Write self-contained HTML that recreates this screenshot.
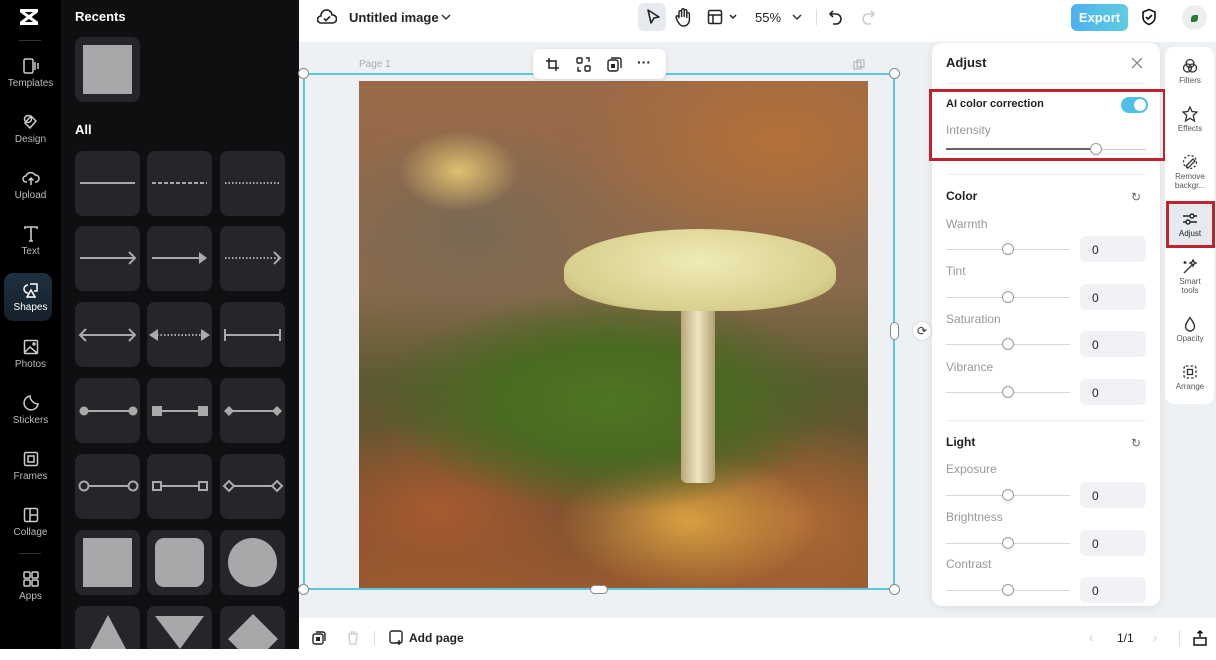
<!DOCTYPE html><html><head><meta charset="utf-8"><style>
*{box-sizing:border-box;margin:0;padding:0}
body{width:1216px;height:660px;overflow:hidden;background:#fff;font-family:"Liberation Sans",sans-serif;position:relative}
.a{position:absolute}
#rail{left:0;top:0;width:61px;height:649px;background:#000}
#panel{left:61px;top:0;width:238px;height:649px;background:#0f0f12}
.ri{position:absolute;left:0;width:61px;text-align:center;color:#bbb;font-size:10px}
.ri svg{display:block;margin:0 auto 3px}
.tile{position:absolute;width:65px;height:65px;background:#26262a;border-radius:8px}
.tile svg{position:absolute;left:0;top:0}
#canvas{left:299px;top:42px;width:917px;height:576px;background:#eef1f4}
.lbl{color:#999;font-size:12px}
.sl{position:absolute;height:1px;background:#d4d7dc}
.kn{position:absolute;width:12px;height:12px;border:1px solid #999;border-radius:50%;background:#fff}
.box{position:absolute;width:66px;height:26px;background:#f0f2f5;border-radius:6px;font-size:12px;color:#222;padding:7px 0 0 12px}
.side{position:absolute;left:1166px;width:48px;text-align:center;font-size:8px;color:#555;line-height:9px}
.side svg{display:block;margin:0 auto 2px}
</style></head><body>
<div id="rail" class="a">
<svg class="a" style="left:17px;top:8px" width="24" height="18" viewBox="0 0 24 18"><path d="M3 2.5h18M3 15.5h18M4 3l16 12M20 3L4 15" stroke="#fff" stroke-width="3" fill="none"/></svg>
<div class="a" style="left:19px;top:40px;width:22px;height:1px;background:#333"></div>
<div class="ri" style="top:57px"><svg width="18" height="18" viewBox="0 0 18 18" fill="none" stroke="#ccc" stroke-width="1.5"><rect x="2" y="2" width="9" height="14" rx="1.5"/><path d="M13 5v8M16 6v6"/></svg>Templates</div>
<div class="ri" style="top:113px"><svg width="18" height="18" viewBox="0 0 18 18" fill="none" stroke="#ccc" stroke-width="1.5"><circle cx="6" cy="6" r="3.5"/><path d="M9 3l5 5-6 7-5-5z"/></svg>Design</div>
<div class="ri" style="top:169px"><svg width="18" height="18" viewBox="0 0 18 18" fill="none" stroke="#ccc" stroke-width="1.5"><path d="M5 13H4a3 3 0 010-6 5 5 0 019-1 3.5 3.5 0 011 7h-1M9 16V9M6.5 11.5L9 9l2.5 2.5"/></svg>Upload</div>
<div class="ri" style="top:225px"><svg width="18" height="18" viewBox="0 0 18 18" fill="none" stroke="#ccc" stroke-width="1.6"><path d="M3 4V2h12v2M9 2v14M7 16h4"/></svg>Text</div>
<div class="a" style="left:4px;top:273px;width:48px;height:48px;border-radius:9px;background:linear-gradient(#1d3040,#15202b)"></div>
<div class="ri" style="top:281px;color:#fff"><svg width="18" height="18" viewBox="0 0 18 18" fill="none" stroke="#fff" stroke-width="1.5"><path d="M6 12a4 4 0 110-8M8 3h7v7h-3M9 9l-4 7h8z"/></svg>Shapes</div>
<div class="ri" style="top:338px"><svg width="18" height="18" viewBox="0 0 18 18" fill="none" stroke="#ccc" stroke-width="1.5"><rect x="2.5" y="2.5" width="13" height="13" rx="1"/><path d="M3 14l5-5 7 6"/><circle cx="12" cy="6" r="1"/></svg>Photos</div>
<div class="ri" style="top:394px"><svg width="18" height="18" viewBox="0 0 18 18" fill="none" stroke="#ccc" stroke-width="1.5"><path d="M16 10a7 7 0 11-8-8c0 4 4 8 8 8z"/></svg>Stickers</div>
<div class="ri" style="top:450px"><svg width="18" height="18" viewBox="0 0 18 18" fill="none" stroke="#ccc" stroke-width="1.5"><rect x="2.5" y="2.5" width="13" height="13" rx="1.5"/><rect x="6" y="6" width="6" height="6"/></svg>Frames</div>
<div class="ri" style="top:506px"><svg width="18" height="18" viewBox="0 0 18 18" fill="none" stroke="#ccc" stroke-width="1.5"><rect x="2.5" y="2.5" width="13" height="13" rx="1.5"/><path d="M8 2.5v13M8 9h7.5"/></svg>Collage</div>
<div class="a" style="left:19px;top:553px;width:22px;height:1px;background:#333"></div>
<div class="ri" style="top:570px"><svg width="18" height="18" viewBox="0 0 18 18" fill="none" stroke="#ccc" stroke-width="1.5"><rect x="2" y="2" width="6" height="6" rx="1"/><rect x="10" y="2" width="6" height="6" rx="1"/><rect x="2" y="10" width="6" height="6" rx="1"/><rect x="10" y="10" width="6" height="6" rx="1"/></svg>Apps</div>
</div>
<div id="panel" class="a">
<div class="a" style="left:14px;top:9px;color:#fff;font-weight:bold;font-size:13px">Recents</div>
<div class="tile" style="left:14px;top:37px"><div class="a" style="left:8px;top:8px;width:49px;height:49px;background:#a8a8aa"></div></div>
<div class="a" style="left:14px;top:122px;color:#fff;font-weight:bold;font-size:13px">All</div>
</div>
<div class="tile" style="left:75px;top:151px"><svg width="65" height="65"><path d="M5 32h55" stroke="#aaa" stroke-width="2"/></svg></div>
<div class="tile" style="left:147px;top:151px"><svg width="65" height="65"><path d="M5 32h55" stroke="#aaa" stroke-width="2" stroke-dasharray="4 2"/></svg></div>
<div class="tile" style="left:220px;top:151px"><svg width="65" height="65"><path d="M5 32h55" stroke="#aaa" stroke-width="2" stroke-dasharray="1.5 2"/></svg></div>
<div class="tile" style="left:75px;top:226px"><svg width="65" height="65"><path d="M5 32h55M54 26l6 6-6 6" stroke="#aaa" stroke-width="2" fill="none"/></svg></div>
<div class="tile" style="left:147px;top:226px"><svg width="65" height="65"><path d="M5 32h50" stroke="#aaa" stroke-width="2"/><path d="M52 26l8 6-8 6z" fill="#aaa"/></svg></div>
<div class="tile" style="left:220px;top:226px"><svg width="65" height="65"><path d="M5 32h55" stroke="#aaa" stroke-width="2" stroke-dasharray="1.5 2"/><path d="M54 26l6 6-6 6" stroke="#aaa" stroke-width="2" fill="none"/></svg></div>
<div class="tile" style="left:75px;top:302px"><svg width="65" height="65"><path d="M5 33h55M11 27l-6 6 6 6M54 27l6 6-6 6" stroke="#aaa" stroke-width="2" fill="none"/></svg></div>
<div class="tile" style="left:147px;top:302px"><svg width="65" height="65"><path d="M10 33h45" stroke="#aaa" stroke-width="2" stroke-dasharray="1.5 2"/><path d="M2 33l9-6v12zM63 33l-9-6v12z" fill="#aaa"/></svg></div>
<div class="tile" style="left:220px;top:302px"><svg width="65" height="65"><path d="M5 33h55M5 27v12M60 27v12" stroke="#aaa" stroke-width="2" fill="none"/></svg></div>
<div class="tile" style="left:75px;top:378px"><svg width="65" height="65"><path d="M8 33h50" stroke="#aaa" stroke-width="2"/><circle cx="9" cy="33" r="4.5" fill="#aaa"/><circle cx="58" cy="33" r="4.5" fill="#aaa"/></svg></div>
<div class="tile" style="left:147px;top:378px"><svg width="65" height="65"><path d="M8 33h50" stroke="#aaa" stroke-width="2"/><rect x="5" y="28" width="10" height="10" fill="#aaa"/><rect x="51" y="28" width="10" height="10" fill="#aaa"/></svg></div>
<div class="tile" style="left:220px;top:378px"><svg width="65" height="65"><path d="M8 33h50" stroke="#aaa" stroke-width="2"/><path d="M9 28l5 5-5 5-5-5zM57 28l5 5-5 5-5-5z" fill="#aaa"/></svg></div>
<div class="tile" style="left:75px;top:454px"><svg width="65" height="65"><path d="M13 32h41" stroke="#aaa" stroke-width="2"/><circle cx="9" cy="32" r="4.5" fill="none" stroke="#aaa" stroke-width="2"/><circle cx="58" cy="32" r="4.5" fill="none" stroke="#aaa" stroke-width="2"/></svg></div>
<div class="tile" style="left:147px;top:454px"><svg width="65" height="65"><path d="M13 32h40" stroke="#aaa" stroke-width="2"/><rect x="6" y="28" width="8" height="8" fill="none" stroke="#aaa" stroke-width="2"/><rect x="52" y="28" width="8" height="8" fill="none" stroke="#aaa" stroke-width="2"/></svg></div>
<div class="tile" style="left:220px;top:454px"><svg width="65" height="65"><path d="M14 32h38" stroke="#aaa" stroke-width="2"/><path d="M9 27l5 5-5 5-5-5zM57 27l5 5-5 5-5-5z" fill="none" stroke="#aaa" stroke-width="2"/></svg></div>
<div class="tile" style="left:75px;top:530px"><div class="a" style="left:8px;top:8px;width:49px;height:49px;background:#a8a8aa"></div></div>
<div class="tile" style="left:147px;top:530px"><div class="a" style="left:8px;top:8px;width:49px;height:49px;background:#a8a8aa;border-radius:9px"></div></div>
<div class="tile" style="left:220px;top:530px"><div class="a" style="left:8px;top:8px;width:49px;height:49px;background:#a8a8aa;border-radius:50%"></div></div>
<div class="tile" style="left:75px;top:606px;height:43px;border-radius:8px 8px 0 0"><svg width="65" height="43"><path d="M33 9l18 34H15z" fill="#a8a8aa"/></svg></div>
<div class="tile" style="left:147px;top:606px;height:43px;border-radius:8px 8px 0 0"><svg width="65" height="43"><path d="M8 10h49L33 43z" fill="#a8a8aa"/></svg></div>
<div class="tile" style="left:220px;top:606px;height:43px;border-radius:8px 8px 0 0"><svg width="65" height="43"><path d="M33 8l25 25-10 10H18L8 33z" fill="#a8a8aa"/></svg></div>
<div class="a" style="left:299px;top:300px;width:8px;height:50px;background:#222;border-radius:0 6px 6px 0"></div>

<svg class="a" style="left:317px;top:8px" width="20" height="18" viewBox="0 0 20 18" fill="none" stroke="#222" stroke-width="1.6"><path d="M5 15H4a3.5 3.5 0 010-7 5.5 5.5 0 0111-1 4 4 0 011 8H5z"/><path d="M7 10.5l2 2 4-4"/></svg>
<div class="a" style="left:349px;top:10px;font-size:13px;font-weight:bold;color:#222">Untitled image</div>
<svg class="a" style="left:441px;top:13px" width="10" height="8"><path d="M1 2l4 4 4-4" stroke="#333" stroke-width="1.5" fill="none"/></svg>
<div class="a" style="left:638px;top:3px;width:28px;height:28px;background:#e6e9ed;border-radius:6px"></div>
<svg class="a" style="left:645px;top:8px" width="16" height="18"><path d="M3 2l11 7-5 1-3 5z" stroke="#222" stroke-width="1.6" fill="none" stroke-linejoin="round"/></svg>
<svg class="a" style="left:674px;top:7px" width="18" height="20" viewBox="0 0 18 20"><path d="M5 11V5a1.3 1.3 0 012.6 0v5V3a1.3 1.3 0 012.6 0v7V4a1.3 1.3 0 012.6 0v7-4a1.3 1.3 0 012.6 0v6a6 6 0 01-6 6c-3 0-4-2-6-5L2 10a1.3 1.3 0 012-1z" stroke="#222" stroke-width="1.4" fill="none"/></svg>
<svg class="a" style="left:707px;top:9px" width="30" height="16"><rect x="1.5" y="1.5" width="13" height="13" rx="1.5" stroke="#222" stroke-width="1.5" fill="none"/><path d="M1.5 6h13M6 6v8.5M23 6l3 3 3-3" stroke="#222" stroke-width="1.5" fill="none"/></svg>
<div class="a" style="left:755px;top:10px;font-size:13px;color:#222">55%</div>
<svg class="a" style="left:792px;top:13px" width="10" height="8"><path d="M1 2l4 4 4-4" stroke="#333" stroke-width="1.5" fill="none"/></svg>
<div class="a" style="left:816px;top:9px;width:1px;height:16px;background:#ddd"></div>
<svg class="a" style="left:828px;top:9px" width="16" height="16"><path d="M5 2L2 5l3 3M2 5h6a5 5 0 010 10H5" stroke="#222" stroke-width="1.6" fill="none"/></svg>
<svg class="a" style="left:860px;top:9px" width="16" height="16"><path d="M11 2l3 3-3 3M14 5H8a5 5 0 000 10h3" stroke="#ccc" stroke-width="1.6" fill="none"/></svg>
<div class="a" style="left:1071px;top:4px;width:57px;height:27px;border-radius:6px;background:linear-gradient(90deg,#4cb1ee,#5fcde0);color:#fff;font-size:13px;font-weight:bold;text-align:center;line-height:27px">Export</div>
<svg class="a" style="left:1141px;top:8px" width="16" height="18"><path d="M8 1.5l6 2.5v5c0 4-3 6.5-6 7.5-3-1-6-3.5-6-7.5V4z" stroke="#111" stroke-width="1.6" fill="none"/><path d="M5 9l2 2 4-4" stroke="#111" stroke-width="1.6" fill="none"/></svg>
<div class="a" style="left:1182px;top:5px;width:25px;height:25px;border-radius:50%;background:#eee"><div class="a" style="left:9px;top:10px;width:7px;height:7px;background:#2e7a3a;border-radius:50% 0"></div></div>

<div id="canvas" class="a"></div>
<div class="a" style="left:359px;top:59px;font-size:10px;color:#aaa">Page 1</div>
<svg class="a" style="left:853px;top:59px" width="12" height="12"><rect x="1" y="3" width="7" height="7" fill="none" stroke="#aaa"/><rect x="4" y="1" width="7" height="7" fill="none" stroke="#aaa"/></svg>
<div class="a" style="left:359px;top:81px;width:509px;height:508px;overflow:hidden;background:
radial-gradient(ellipse 230px 110px at 250px 320px,#4f7424 0%,#4a6a22 50%,rgba(80,100,40,0) 100%),
radial-gradient(ellipse 130px 70px at 330px 440px,#d9a040 0%,rgba(190,130,60,0) 100%),
radial-gradient(ellipse 160px 90px at 80px 430px,#a85a30 0%,rgba(150,90,50,0) 100%),
radial-gradient(ellipse 160px 100px at 440px 440px,#b06a35 0%,rgba(150,90,50,0) 100%),
radial-gradient(ellipse 200px 120px at 420px 60px,#b57038 0%,rgba(150,90,50,0) 100%),
radial-gradient(ellipse 60px 40px at 100px 90px,#e0c070 0%,rgba(200,160,100,0) 100%),
radial-gradient(ellipse 160px 110px at 110px 150px,#7a6a55 0%,rgba(120,100,80,0) 100%),
linear-gradient(#9a6a48,#8a6a4c 40%,#5a5a30 60%,#7a5030 85%,#9a5a30)">
<div class="a" style="left:322px;top:212px;width:34px;height:190px;background:linear-gradient(90deg,#b8a878,#eee4c2,#b0a070);border-radius:6px"></div>
<div class="a" style="left:205px;top:148px;width:272px;height:82px;border-radius:50% 50% 40% 40%;background:radial-gradient(ellipse at 50% 40%,#f0ebb8,#d7cf8c 70%,#b8a868)"></div>
</div>
<div class="a" style="left:303px;top:73px;width:592px;height:517px;border:2px solid #59c8dc"></div>
<div class="a" style="left:298px;top:68px;width:11px;height:11px;border:1px solid #888;border-radius:50%;background:#fff"></div>
<div class="a" style="left:889px;top:68px;width:11px;height:11px;border:1px solid #888;border-radius:50%;background:#fff"></div>
<div class="a" style="left:298px;top:584px;width:11px;height:11px;border:1px solid #888;border-radius:50%;background:#fff"></div>
<div class="a" style="left:889px;top:584px;width:11px;height:11px;border:1px solid #888;border-radius:50%;background:#fff"></div>
<div class="a" style="left:590px;top:585px;width:18px;height:9px;border:1px solid #888;border-radius:5px;background:#fff"></div>
<div class="a" style="left:890px;top:322px;width:9px;height:18px;border:1px solid #888;border-radius:5px;background:#fff"></div>
<div class="a" style="left:912px;top:321px;width:20px;height:20px;border-radius:50%;background:#fff;border:1px solid #ddd;font-size:12px;text-align:center;line-height:18px;color:#333">⟳</div>
<div class="a" style="left:533px;top:49px;width:133px;height:30px;background:#fff;border-radius:7px;box-shadow:0 1px 4px rgba(0,0,0,.12)"></div>
<svg class="a" style="left:545px;top:57px" width="15" height="15"><path d="M4 1v10h10M1 4h10v10" stroke="#222" stroke-width="1.5" fill="none"/></svg>
<svg class="a" style="left:576px;top:57px" width="15" height="15"><rect x="1" y="1" width="5" height="5" rx="1" stroke="#222" stroke-width="1.4" fill="none"/><rect x="9" y="9" width="5" height="5" rx="1" stroke="#222" stroke-width="1.4" fill="none"/><path d="M10 1h3v4M5 14H2v-4" stroke="#222" stroke-width="1.4" fill="none"/></svg>
<svg class="a" style="left:607px;top:57px" width="15" height="15"><rect x="1" y="3" width="10" height="11" rx="2" stroke="#222" stroke-width="1.4" fill="none"/><path d="M4 1h8a2 2 0 012 2v8" stroke="#222" stroke-width="1.4" fill="none"/><rect x="4" y="7" width="4" height="4" fill="#222"/></svg>
<div class="a" style="left:637px;top:54px;font-size:14px;font-weight:bold;color:#222">···</div>

<div class="a" style="left:932px;top:43px;width:228px;height:563px;background:#fff;border-radius:10px;box-shadow:0 2px 10px rgba(0,0,0,.08)"></div>
<div class="a" style="left:946px;top:55px;font-size:13px;font-weight:bold;color:#222">Adjust</div>
<svg class="a" style="left:1131px;top:57px" width="12" height="12"><path d="M1 1l10 10M11 1L1 11" stroke="#888" stroke-width="1.3"/></svg>
<div class="a" style="left:946px;top:83px;width:200px;height:1px;background:#eee"></div>
<div class="a" style="left:929px;top:89px;width:237px;height:72px;border:3px solid #c0232b"></div>
<div class="a" style="left:946px;top:98px;font-size:11px;font-weight:bold;color:#222">AI color correction</div>
<div class="a" style="left:1121px;top:97px;width:27px;height:16px;border-radius:8px;background:#4ebfe6"><div class="a" style="left:13px;top:2px;width:12px;height:12px;border-radius:50%;background:#fff"></div></div>
<div class="a lbl" style="left:946px;top:123px">Intensity</div>
<div class="sl" style="left:946px;top:149px;width:200px;background:#c5c8cc"></div>
<div class="sl" style="left:946px;top:148px;width:150px;height:2px;background:#60646a"></div>
<div class="kn" style="left:1090px;top:143px"></div>
<div class="a" style="left:946px;top:174px;width:200px;height:1px;background:#eee"></div>
<div class="a" style="left:946px;top:189px;font-size:12px;font-weight:bold;color:#222">Color</div>
<div class="a" style="left:1131px;top:190px;font-size:12px;color:#666">↻</div>
<div class="a lbl" style="left:946px;top:217px">Warmth</div>
<div class="sl" style="left:946px;top:249px;width:124px"></div><div class="kn" style="left:1002px;top:243px"></div><div class="box" style="left:1080px;top:236px">0</div>
<div class="a lbl" style="left:946px;top:264px">Tint</div>
<div class="sl" style="left:946px;top:297px;width:124px"></div><div class="kn" style="left:1002px;top:291px"></div><div class="box" style="left:1080px;top:284px">0</div>
<div class="a lbl" style="left:946px;top:312px">Saturation</div>
<div class="sl" style="left:946px;top:344px;width:124px"></div><div class="kn" style="left:1002px;top:338px"></div><div class="box" style="left:1080px;top:331px">0</div>
<div class="a lbl" style="left:946px;top:360px">Vibrance</div>
<div class="sl" style="left:946px;top:392px;width:124px"></div><div class="kn" style="left:1002px;top:386px"></div><div class="box" style="left:1080px;top:379px">0</div>
<div class="a" style="left:946px;top:420px;width:200px;height:1px;background:#eee"></div>
<div class="a" style="left:946px;top:435px;font-size:12px;font-weight:bold;color:#222">Light</div>
<div class="a" style="left:1131px;top:436px;font-size:12px;color:#666">↻</div>
<div class="a lbl" style="left:946px;top:462px">Exposure</div>
<div class="sl" style="left:946px;top:495px;width:124px"></div><div class="kn" style="left:1002px;top:489px"></div><div class="box" style="left:1080px;top:482px">0</div>
<div class="a lbl" style="left:946px;top:510px">Brightness</div>
<div class="sl" style="left:946px;top:543px;width:124px"></div><div class="kn" style="left:1002px;top:537px"></div><div class="box" style="left:1080px;top:530px">0</div>
<div class="a lbl" style="left:946px;top:557px">Contrast</div>
<div class="sl" style="left:946px;top:590px;width:124px"></div><div class="kn" style="left:1002px;top:584px"></div><div class="box" style="left:1080px;top:577px">0</div>

<div class="a" style="left:1165px;top:47px;width:49px;height:357px;background:#fff;border-radius:9px"></div>
<div class="side" style="top:58px"><svg width="16" height="16" viewBox="0 0 16 16" fill="none" stroke="#333" stroke-width="1.3"><circle cx="8" cy="5.5" r="4"/><circle cx="5.5" cy="10" r="4"/><circle cx="10.5" cy="10" r="4"/></svg>Filters</div>
<div class="side" style="top:106px"><svg width="16" height="16" viewBox="0 0 16 16" fill="none" stroke="#333" stroke-width="1.3"><path d="M8 1l2 4.5 5 .5-3.7 3.4L12.5 15 8 12.3 3.5 15l1.2-5.6L1 6l5-.5z"/></svg>Effects</div>
<div class="side" style="top:154px"><svg width="16" height="16" viewBox="0 0 16 16" fill="none" stroke="#333" stroke-width="1.3"><path d="M4 12l7-7 2 2-7 7z" /><circle cx="8" cy="8" r="6.5" stroke-dasharray="2 2"/></svg>Remove<br>backgr...</div>
<div class="a" style="left:1166px;top:201px;width:49px;height:47px;border:3px solid #c0232b;background:#e6e9ed"></div>
<div class="side" style="top:211px;color:#222"><svg width="16" height="16" viewBox="0 0 16 16" fill="none" stroke="#222" stroke-width="1.4"><path d="M1 5h14M1 11h14"/><circle cx="10" cy="5" r="2" fill="#e6e9ed"/><circle cx="6" cy="11" r="2" fill="#e6e9ed"/></svg>Adjust</div>
<div class="side" style="top:259px"><svg width="16" height="16" viewBox="0 0 16 16" fill="none" stroke="#333" stroke-width="1.4"><path d="M2 14l9-9M10 3l1-2 1 2 2 1-2 1-1 2-1-2-2-1zM3 2v3M1.5 3.5h3"/></svg>Smart<br>tools</div>
<div class="side" style="top:316px"><svg width="16" height="16" viewBox="0 0 16 16" fill="none" stroke="#333" stroke-width="1.4"><path d="M8 1.5C5 6 3.5 8 3.5 10.5a4.5 4.5 0 009 0C12.5 8 11 6 8 1.5z"/></svg>Opacity</div>
<div class="side" style="top:364px"><svg width="16" height="16" viewBox="0 0 16 16" fill="none" stroke="#333" stroke-width="1.3"><rect x="2" y="2" width="12" height="12" rx="2" stroke-dasharray="2.5 2"/><rect x="5.5" y="5.5" width="5" height="5"/></svg>Arrange</div>

<div class="a" style="left:299px;top:618px;width:917px;height:42px;background:#fff"></div>
<svg class="a" style="left:312px;top:631px" width="14" height="14"><rect x="1" y="3" width="10" height="10" rx="2" stroke="#222" stroke-width="1.4" fill="none"/><path d="M4 1h7a2 2 0 012 2v7" stroke="#222" stroke-width="1.4" fill="none"/><rect x="4" y="6" width="4" height="4" fill="#222"/></svg>
<svg class="a" style="left:347px;top:631px" width="12" height="14"><path d="M1 3h10M4 3V1h4v2M2 3l1 10h6l1-10" stroke="#ccc" stroke-width="1.3" fill="none"/></svg>
<div class="a" style="left:374px;top:631px;width:1px;height:14px;background:#ddd"></div>
<svg class="a" style="left:389px;top:630px" width="16" height="16"><rect x="1" y="1" width="12" height="12" rx="2" stroke="#222" stroke-width="1.4" fill="none"/><path d="M10 10v5M7.5 12.5h5" stroke="#222" stroke-width="1.4"/></svg>
<div class="a" style="left:409px;top:631px;font-size:12px;font-weight:bold;color:#222">Add page</div>
<div class="a" style="left:1089px;top:630px;font-size:13px;color:#ccc">‹</div>
<div class="a" style="left:1117px;top:631px;font-size:12px;color:#222">1/1</div>
<div class="a" style="left:1153px;top:630px;font-size:13px;color:#ccc">›</div>
<div class="a" style="left:1179px;top:630px;width:1px;height:16px;background:#ddd"></div>
<svg class="a" style="left:1192px;top:630px" width="16" height="16"><path d="M2 8h12v7H2zM8 1v6M5.5 3.5L8 1l2.5 2.5" stroke="#111" stroke-width="1.5" fill="none"/></svg>
</body></html>
